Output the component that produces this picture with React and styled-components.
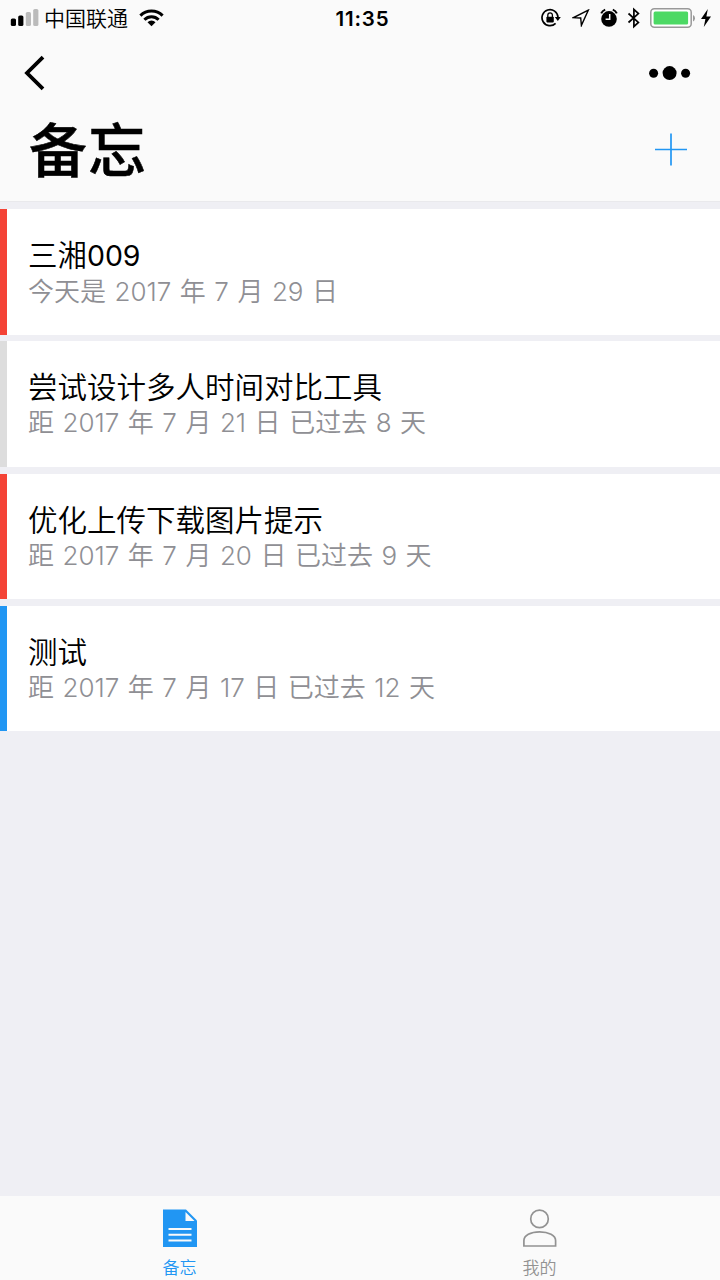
import React from 'react';
import styled, { createGlobalStyle } from 'styled-components';

const GlobalStyle = createGlobalStyle`
  * {
    box-sizing: border-box;
  }

  body {
    margin: 0;
    background-color: #efeff4;
    font-family: Inter, 'Noto Sans CJK SC', sans-serif;
  }
`;

const Page = styled.div`
  display: flex;
  flex-direction: column;
  width: 100%;
  height: 1280px;
  overflow: hidden;
  background-color: #efeff4;
`;

const Header = styled.header`
  height: 202px;
  flex-shrink: 0;
  background-color: #fafafa;
  border-bottom: 1px solid #e9e9ec;
`;

const StatusBar = styled.div`
  display: grid;
  grid-template-columns: 1fr auto 1fr;
  align-items: center;
  height: 36px;
  padding: 0 8px 0 10px;
`;

const StatusLeft = styled.div`
  display: flex;
  align-items: center;
`;

const StatusRight = styled.div`
  display: flex;
  align-items: center;
  justify-content: flex-end;
`;

const Gap = styled.span`
  flex: none;
  width: ${(props) => props.$width}px;
`;

const Carrier = styled.span`
  margin: 2px 11px 0 5px;
  font-size: 21px;
  font-weight: 350;
  line-height: 30px;
  color: #000;
`;

const Clock = styled.span`
  padding: 1px 0 0 3px;
  font-size: 20.5px;
  font-weight: 600;
  line-height: 30px;
  letter-spacing: 0.8px;
`;

const NavBar = styled.div`
  display: flex;
  align-items: center;
  justify-content: space-between;
  height: 74px;
  padding: 0 29px 0 24px;
`;

const TitleBar = styled.div`
  display: flex;
  align-items: center;
  justify-content: space-between;
  height: 79px;
  padding: 0 32px 0 29px;
`;

const PageTitle = styled.h1`
  margin: 0;
  padding-top: 2px;
  font-size: 58px;
  font-weight: 500;
  line-height: 80px;
  letter-spacing: 1px;
  -webkit-text-stroke: 0.5px #000;
`;

const List = styled.main`
  display: flex;
  flex: 1;
  flex-direction: column;
  gap: 6.8px;
  padding-top: 7.3px;
`;

const Item = styled.article`
  height: 125.4px;
  padding: 28px 0 0 21px;
  background-color: #fff;
  border-left: 7px solid ${(props) => props.$color};
`;

const ItemTitle = styled.h2`
  margin: 0;
  font-size: 29.5px;
  font-weight: 350;
  line-height: 36px;
  color: #000;
`;

const Digits = styled.span`
  font-size: 28.5px;
  font-weight: 400;
  letter-spacing: -0.1px;
`;

const ItemDate = styled.p`
  margin: 0;
  font-size: 26px;
  font-weight: 350;
  line-height: 35px;
  word-spacing: 1.2px;
  color: #8f8f94;
`;

const TabBar = styled.nav`
  display: grid;
  grid-template-columns: 1fr 1fr;
  flex-shrink: 0;
  height: 84px;
  background-color: #fafafa;
`;

const Tab = styled.div`
  display: flex;
  flex-direction: column;
  align-items: center;
  padding-top: 13px;
  color: ${(props) => (props.$active ? '#2196f3' : '#929292')};
`;

const TabLabel = styled.span`
  margin-top: 9px;
  padding-right: 1px;
  font-size: 17px;
  font-weight: 350;
  line-height: 24px;
`;

const SignalIcon = () => (
  <svg width="29" height="20" viewBox="0 0 29 20">
    <rect x="0.8" y="10.5" width="5.2" height="7.5" rx="1.6" />
    <rect x="8.2" y="7.5" width="5.2" height="10.5" rx="1.6" />
    <rect x="15.8" y="4" width="5.2" height="14" rx="1.6" fill="#bbb" />
    <rect x="23.2" y="1" width="5.2" height="17" rx="1.6" fill="#bbb" />
  </svg>
);

const WifiIcon = () => (
  <svg width="25" height="20" viewBox="0 0 25 20">
    <g fill="none" stroke="#000" strokeWidth="3">
      <path d="M1.4 7.6a15.6 15.6 0 0 1 22.2 0" />
      <path d="M5.4 11.7a10 10 0 0 1 14.2 0" />
    </g>
    <path d="M12.5 18.2 8.5 14.2a5.7 5.7 0 0 1 8 0z" />
  </svg>
);

const RotationLockIcon = () => (
  <svg width="20" height="20" viewBox="0 0 20 20">
    <path d="M14.6 15.4A8 8 0 1 1 17 9.2" fill="none" stroke="#000" strokeWidth="1.7" />
    <path d="M13.8 9h6l-3 4z" />
    <rect x="5.4" y="8.8" width="7.4" height="5.6" rx="0.8" />
    <path d="M6.8 9V7.2a2.3 2.3 0 0 1 4.6 0V9" fill="none" stroke="#000" strokeWidth="1.3" />
  </svg>
);

const LocationIcon = () => (
  <svg width="18" height="18" viewBox="0 0 18 18">
    <path d="M16.3 1.2 1.6 8.6l7.1.4.7 7.4z" fill="none" stroke="#000" strokeWidth="1.4" />
  </svg>
);

const AlarmIcon = () => (
  <svg width="18" height="20" viewBox="0 0 18 20">
    <circle cx="9" cy="10.9" r="7.8" />
    <path d="M1.2 5.3a7 7 0 0 1 4-3.7M16.8 5.3a7 7 0 0 0-4-3.7" fill="none" stroke="#000" strokeWidth="2" />
    <path d="M9.7 6v5.2H5.6" fill="none" stroke="#fafafa" strokeWidth="1.5" />
  </svg>
);

const BluetoothIcon = () => (
  <svg width="14" height="22" viewBox="0 0 14 22">
    <path d="M1.5 6.5 11.4 15.4 6.9 19.6V2.4L11.4 6.6 1.5 15.5" fill="none" stroke="#000" strokeWidth="1.7" />
  </svg>
);

const BatteryIcon = () => (
  <svg width="46" height="20" viewBox="0 0 46 20">
    <rect x="0.8" y="0.8" width="40.4" height="18.4" rx="3.5" fill="#fff" stroke="#999" strokeWidth="1.5" />
    <rect x="3.6" y="3.5" width="34.5" height="13" rx="1.5" fill="#4cd964" />
    <path d="M43 7v6.4q2-1 2-3.2T43 7z" fill="#999" />
  </svg>
);

const BoltIcon = () => (
  <svg width="12" height="20" viewBox="0 0 12 20">
    <path d="M7.8 1 1 11h4.4L3.8 19 11 8.6H6.4z" />
  </svg>
);

const BackIcon = () => (
  <svg width="22" height="36" viewBox="0 0 22 36">
    <path d="M19 2.2 3 18l16 15.8" fill="none" stroke="#000" strokeWidth="3.8" />
  </svg>
);

const MoreIcon = () => (
  <svg width="42" height="16" viewBox="0 0 42 16">
    <circle cx="4.6" cy="8.3" r="4.5" />
    <circle cx="20.6" cy="8.1" r="7" />
    <circle cx="36.6" cy="8.3" r="4.5" />
  </svg>
);

const PlusIcon = () => (
  <svg width="33" height="33" viewBox="0 0 33 33">
    <path d="M16 0.5v32M0 16.5h32" fill="none" stroke="#2196f3" strokeWidth="1.7" />
  </svg>
);

const NoteIcon = () => (
  <svg width="34" height="38" viewBox="0 0 34 38">
    <path d="M0 0.5h23L34 11.5V38H0z" fill="#2196f3" />
    <path d="M22.5 3v9h9z" fill="#fafafa" />
    <path d="M5.5 20H28.5M5.5 25.7H28.5M5.5 31.4H28.5" stroke="#fafafa" strokeWidth="2" />
  </svg>
);

const ProfileIcon = () => (
  <svg width="34" height="38" viewBox="0 0 34 38">
    <g fill="none" stroke="#929292" strokeWidth="1.7">
      <circle cx="16.5" cy="9.9" r="8.8" />
      <path d="M0.9 37V31.5C0.9 26.5 7.5 22.8 16.6 22.8S32.6 26.5 32.6 31.5V37z" />
    </g>
  </svg>
);

const items = [
  { title: '三湘', number: '009', date: '今天是 2017 年 7 月 29 日', color: '#f44336' },
  { title: '尝试设计多人时间对比工具', date: '距 2017 年 7 月 21 日 已过去 8 天', color: '#dddddd' },
  { title: '优化上传下载图片提示', date: '距 2017 年 7 月 20 日 已过去 9 天', color: '#f44336' },
  { title: '测试', date: '距 2017 年 7 月 17 日 已过去 12 天', color: '#2196f3' },
];

const App = () => {
  return (
    <Page>
      <GlobalStyle />
      <Header>
        <StatusBar>
          <StatusLeft>
            <SignalIcon />
            <Carrier>中国联通</Carrier>
            <WifiIcon />
          </StatusLeft>
          <Clock>11:35</Clock>
          <StatusRight>
            <RotationLockIcon />
            <Gap $width={11} />
            <LocationIcon />
            <Gap $width={10} />
            <AlarmIcon />
            <Gap $width={9} />
            <BluetoothIcon />
            <Gap $width={9} />
            <BatteryIcon />
            <Gap $width={4} />
            <BoltIcon />
          </StatusRight>
        </StatusBar>
        <NavBar>
          <BackIcon />
          <MoreIcon />
        </NavBar>
        <TitleBar>
          <PageTitle>备忘</PageTitle>
          <PlusIcon />
        </TitleBar>
      </Header>
      <List>
        {items.map((item) => (
          <Item key={item.title} $color={item.color}>
            <ItemTitle>
              {item.title}
              {item.number && <Digits>{item.number}</Digits>}
            </ItemTitle>
            <ItemDate>{item.date}</ItemDate>
          </Item>
        ))}
      </List>
      <TabBar>
        <Tab $active>
          <NoteIcon />
          <TabLabel>备忘</TabLabel>
        </Tab>
        <Tab>
          <ProfileIcon />
          <TabLabel>我的</TabLabel>
        </Tab>
      </TabBar>
    </Page>
  );
};

export default App;
